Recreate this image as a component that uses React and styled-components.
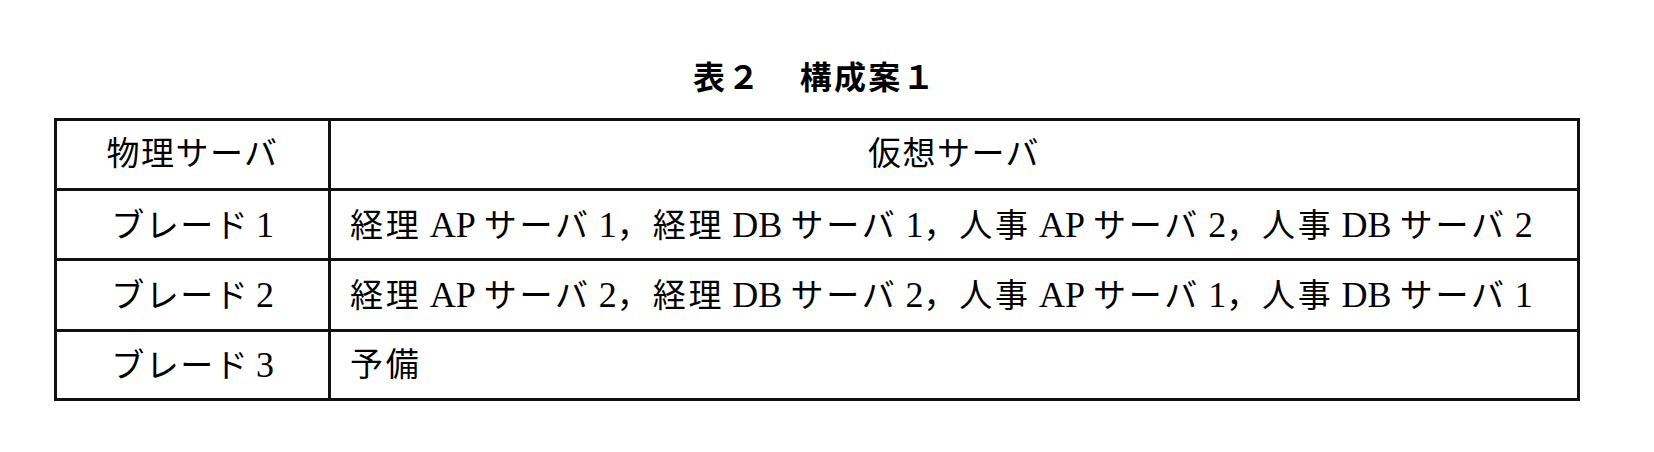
import React from 'react';
import styled, { createGlobalStyle } from 'styled-components';

const GlobalStyle = createGlobalStyle`
  html, body {
    margin: 0;
    padding: 0;
    background: #ffffff;
  }
  body {
    width: 1654px;
    height: 452px;
    overflow: hidden;
    color: #000000;
    font-family: "Liberation Serif", "Noto Sans CJK JP", serif;
  }
`;

const rows = [
  { name: 'ブレード 1', servers: '経理 AP サーバ 1，経理 DB サーバ 1，人事 AP サーバ 2，人事 DB サーバ 2', height: 70 },
  { name: 'ブレード 2', servers: '経理 AP サーバ 2，経理 DB サーバ 2，人事 AP サーバ 1，人事 DB サーバ 1', height: 71 },
  { name: 'ブレード 3', servers: '予備', height: 69 },
];

// latin letters and digits are set a little larger, like the printed table
const Mixed = ({ text }) =>
  text.split(/([A-Za-z0-9]+)/).map((part, i) =>
    /^[A-Za-z0-9]+$/.test(part) ? <Latin key={i}>{part}</Latin> : part
  );

const App = () => {
  return (
    <Page>
      <GlobalStyle />
      <Title>
        表２<TitleGap />構成案１
      </Title>
      <Table>
        <colgroup>
          <col style={{ width: 274 }} />
          <col />
        </colgroup>
        <tbody>
          <Row $height={70}>
            <Cell $center>物理サーバ</Cell>
            <Cell $center>仮想サーバ</Cell>
          </Row>
          {rows.map((row) => (
            <Row key={row.name} $height={row.height}>
              <Cell $center>
                <Mixed text={row.name} />
              </Cell>
              <Cell>
                <Mixed text={row.servers} />
              </Cell>
            </Row>
          ))}
        </tbody>
      </Table>
    </Page>
  );
};

export default App;

const Page = styled.div`
  display: flex;
  flex-direction: column;
  align-items: flex-start;
  padding: 56px 0 0 54px;
`;

const Title = styled.div`
  width: 1522px;
  display: flex;
  justify-content: center;
  font-family: "Noto Sans CJK JP", sans-serif;
  font-weight: 700;
  font-size: 32px;
  line-height: 38px;
  letter-spacing: 2.3px;
  margin-bottom: 24px;
`;

const TitleGap = styled.span`
  display: inline-block;
  width: 38px;
`;

const Table = styled.table`
  width: 1526px;
  border-collapse: collapse;
  table-layout: fixed;
  border: 3px solid #000;
`;

const Row = styled.tr`
  height: ${(p) => p.$height}px;
`;

const Cell = styled.td`
  border: 3px solid #111;
  padding: 0 0 0 ${(p) => (p.$center ? 0 : 19)}px;
  text-align: ${(p) => (p.$center ? 'center' : 'left')};
  vertical-align: middle;
  font-size: 33px;
  letter-spacing: ${(p) => (p.$center ? 1.5 : 2.8)}px;
  word-spacing: -3px;
  line-height: 1;
  white-space: nowrap;
`;

const Latin = styled.span`
  font-family: "Liberation Serif", serif;
  font-size: 36px;
  letter-spacing: 0;
`;
